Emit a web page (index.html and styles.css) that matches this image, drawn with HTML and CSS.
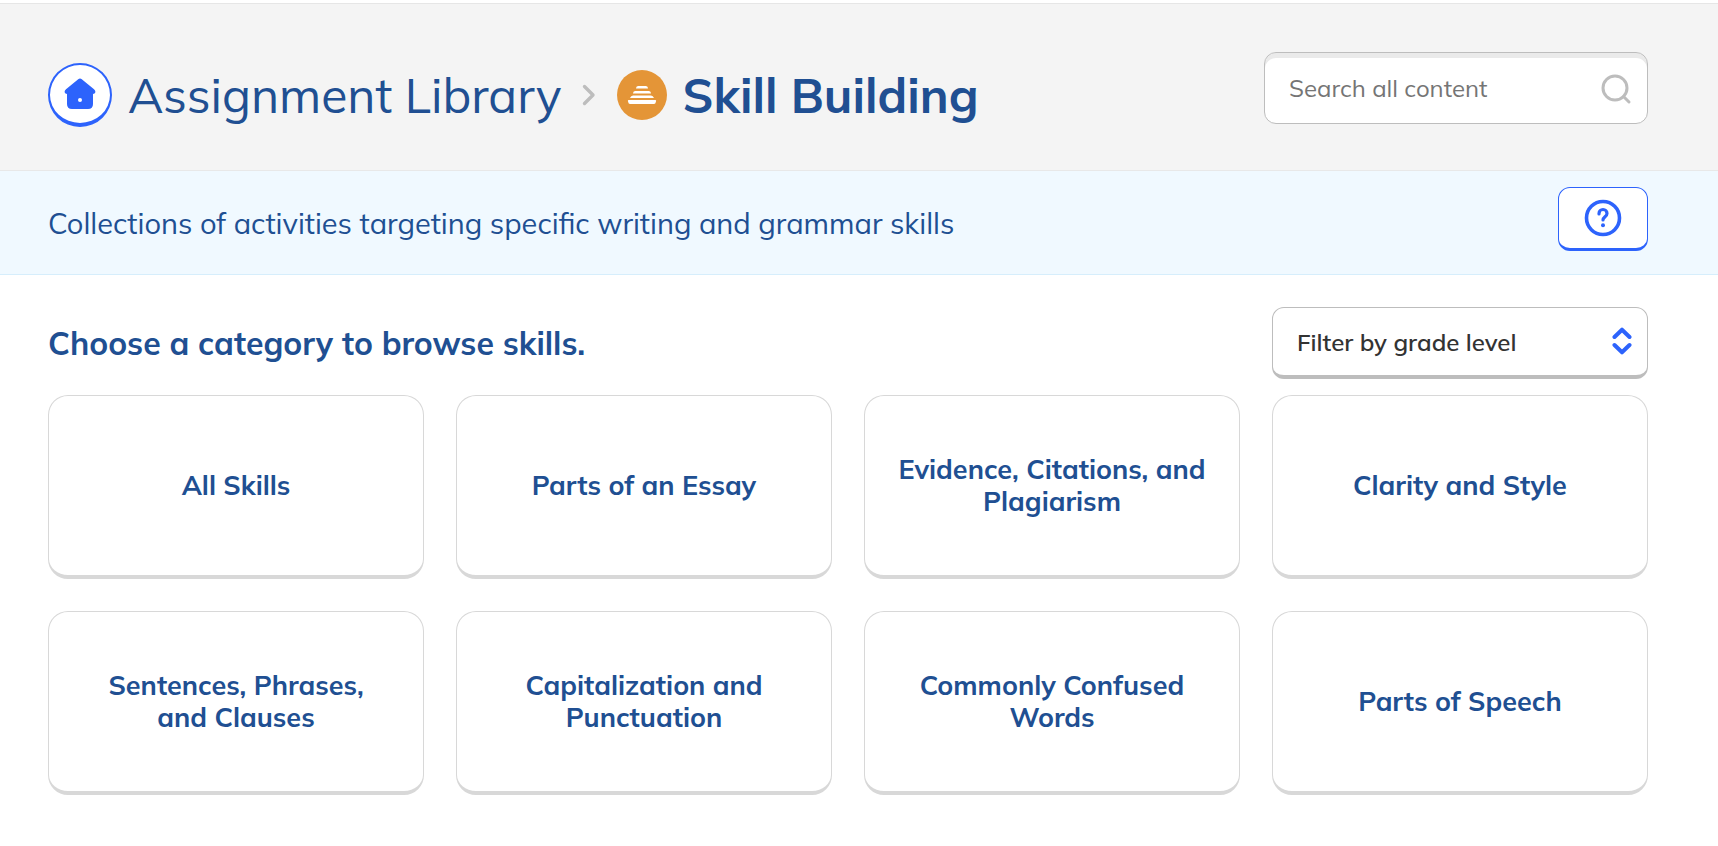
FILE: index.html
```html
<!DOCTYPE html>
<html lang="en">
<head>
<meta charset="utf-8">
<meta name="viewport" content="width=device-width, initial-scale=1">
<title>Skill Building - Assignment Library</title>
<link rel="stylesheet" href="styles.css">
</head>
<body>
<header class="page-header">
  <nav class="breadcrumb" aria-label="Breadcrumb">
    <a class="home-link" href="#" aria-label="Home">
      <svg width="32" height="32" viewBox="0 0 32 32" aria-hidden="true">
        <path d="M14.2 1.2Q16 0 17.8 1.2L30 11.200Q32.500 13.600 30.500 15.400L29 16V26Q29 31 24 31H8Q3 31 3 26V16L1.500 15.400Q-.5 13.600 2 11.200Z" fill="#2d63fc"/>
        <circle cx="16" cy="22" r="2" fill="#fff"/>
      </svg>
    </a>
    <a class="crumb" href="#">Assignment Library</a>
    <svg class="crumb-arrow" width="14" height="22" viewBox="0 0 14 22" aria-hidden="true">
      <path d="M2.500 2.500L11 11L2.500 19.500" fill="none" stroke="#bdbdbd" stroke-width="3.400" stroke-linecap="round" stroke-linejoin="round"/>
    </svg>
    <svg class="skill-icon" width="50" height="50" viewBox="0 0 50 50" aria-hidden="true">
      <circle cx="25" cy="25" r="25" fill="#e49537"/>
      <path d="M21 16H29Q31 16 31 18.500H19Q19 16 21 16ZM18 21H32Q34 21 34 23.500H16Q16 21 18 21ZM16 25.500H34Q36 25.500 37 28H13Q14 25.500 16 25.500ZM11.500 30H38.500Q39.500 30 39 31.500Q38.500 34 37 34H13Q11.500 34 11 31.500Q10.500 30 11.500 30Z" fill="#fff"/>
    </svg>
    <h1 class="title">Skill Building</h1>
  </nav>
  <div class="search">
    <input class="search-input" type="search" placeholder="Search all content" aria-label="Search all content">
    <svg class="search-icon" width="32" height="32" viewBox="0 0 32 32" aria-hidden="true">
      <g fill="none" stroke="#bdbdbd" stroke-width="3" stroke-linecap="round"><circle cx="15" cy="15" r="12"/><path d="M23.500 23.500L29 29"/></g>
    </svg>
  </div>
</header>
<section class="intro">
  <p class="intro-text">Collections of activities targeting specific writing and grammar skills</p>
  <button class="help" type="button" aria-label="Help">
    <svg width="38" height="38" viewBox="0 0 38 38" aria-hidden="true">
      <circle cx="19" cy="19" r="16.500" fill="none" stroke="#2d63fc" stroke-width="3.600"/>
      <path d="M15 15V14.500A4 4 0 0 1 23 14.500C23 17.500 19 18 19 21" fill="none" stroke="#2d63fc" stroke-width="3.200" stroke-linecap="round"/>
      <circle cx="19" cy="26.300" r="2" fill="#2d63fc"/>
    </svg>
  </button>
</section>
<main class="content">
  <div class="toolbar">
    <h2 class="subtitle">Choose a category to browse skills.</h2>
    <div class="filter">
      <select class="filter-select" aria-label="Filter by grade level"><option>Filter by grade level</option></select>
      <svg class="filter-icon" width="20" height="28" viewBox="0 0 20 28" aria-hidden="true">
        <path d="M2.500 10L10 2.700L17.500 10M2.500 18L10 25.300L17.500 18" fill="none" stroke="#2d63fc" stroke-width="4" stroke-linecap="round" stroke-linejoin="round"/>
      </svg>
    </div>
  </div>
  <div class="grid">
    <a class="card" href="#">All Skills</a>
    <a class="card" href="#">Parts of an Essay</a>
    <a class="card" href="#">Evidence, Citations, and Plagiarism</a>
    <a class="card" href="#">Clarity and Style</a>
    <a class="card card-narrow" href="#">Sentences, Phrases, and Clauses</a>
    <a class="card card-narrow" href="#">Capitalization and Punctuation</a>
    <a class="card card-narrow" href="#">Commonly Confused Words</a>
    <a class="card" href="#">Parts of Speech</a>
  </div>
</main>
</body>
</html>
```
FILE: styles.css
```css
* { box-sizing: border-box; }
body {
  margin: 0;
  padding-top: 3px;
  background: #fff;
  color: #204f92;
  font-family: Mulish, Lato, sans-serif;
}
h1, h2, p { margin: 0; }
a { color: inherit; text-decoration: none; }
svg { display: block; flex: none; }

.page-header {
  display: flex;
  align-items: flex-start;
  justify-content: space-between;
  gap: 32px;
  padding: 48px 70px 43px 48px;
  background: #f4f4f4;
  border-top: 1px solid #e6e6e6;
  border-bottom: 1px solid #e8e8e8;
}
.breadcrumb {
  display: flex;
  align-items: center;
  padding-top: 11px;
  font-size: 48px;
  line-height: 60px;
  white-space: nowrap;
}
.home-link {
  display: flex;
  align-items: center;
  justify-content: center;
  width: 64px;
  height: 64px;
  margin-right: 16px;
  background: #fff;
  border: 2px solid #2d63fc;
  border-bottom-width: 4px;
  border-radius: 50%;
}
.crumb-arrow { margin: 0 21px 0 20px; }
.title {
  margin-left: 16px;
  font-size: 48px;
  line-height: 60px;
  font-weight: 700;
}
.search, .filter { position: relative; flex: none; }
.search { width: 384px; }
.search-input {
  display: block;
  width: 100%;
  height: 72px;
  padding: 0 56px 0 24px;
  border: 1px solid #bdbdbd;
  border-radius: 12px;
  background: #fff;
  box-shadow: inset 0 5px 0 #eaeaea;
  color: #333;
  font: 400 24px/32px Mulish, Lato, sans-serif;
}
.search-input::placeholder { color: #757575; opacity: 1; }
.search-icon { position: absolute; top: 21px; right: 16px; pointer-events: none; }

.intro {
  display: flex;
  align-items: center;
  justify-content: space-between;
  padding: 16px 70px 23px 48px;
  background: #f0f9ff;
  border-bottom: 1px solid #d6eefc;
}
.intro-text { padding-top: 8px; font-size: 29px; line-height: 40px; }
.help {
  display: flex;
  align-items: center;
  justify-content: center;
  width: 90px;
  height: 64px;
  padding: 0;
  background: #fff;
  border: 1px solid #2d63fc;
  border-bottom-width: 3px;
  border-radius: 12px;
}

.content { padding: 32px 70px 48px 48px; }
.toolbar {
  display: flex;
  align-items: center;
  justify-content: space-between;
  margin-bottom: 16px;
}
.subtitle { font-size: 32px; line-height: 40px; font-weight: 700; }
.filter { width: 376px; }
.filter-select {
  display: block;
  width: 100%;
  height: 72px;
  padding: 0 48px 0 24px;
  appearance: none;
  background: #fff;
  border: 1px solid #bdbdbd;
  border-bottom-width: 4px;
  border-radius: 12px;
  color: #333;
  font: 600 24px/32px Mulish, Lato, sans-serif;
}
.filter-icon { position: absolute; top: 20px; right: 16px; pointer-events: none; }

.grid {
  display: grid;
  grid-template-columns: repeat(4, 1fr);
  gap: 32px;
}
.card {
  display: flex;
  align-items: center;
  justify-content: center;
  min-height: 184px;
  padding: 0 24px 2px;
  background: #fff;
  border: 1px solid #d8d8d8;
  border-bottom-width: 4px;
  border-radius: 20px;
  font-size: 27px;
  line-height: 32px;
  font-weight: 700;
  text-align: center;
}
.card-narrow { padding: 0 48px 2px; }
```
